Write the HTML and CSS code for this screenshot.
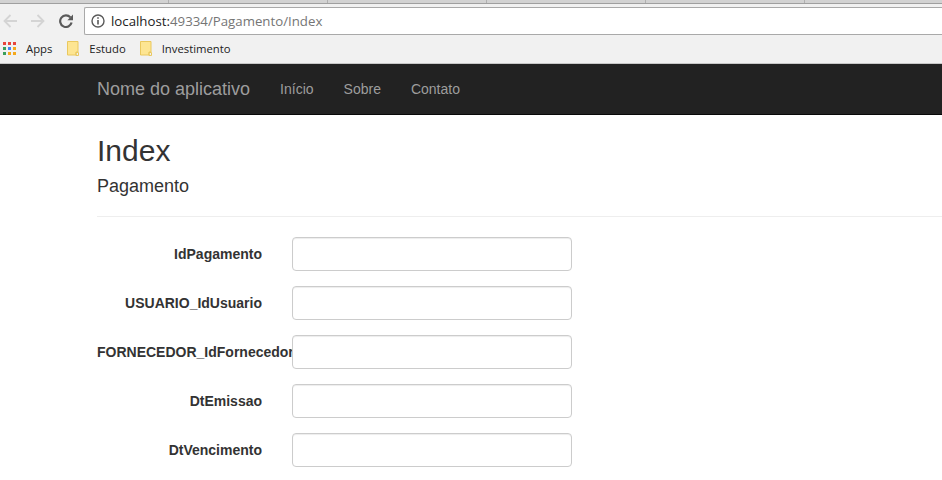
FILE: index.html
```html
<!DOCTYPE html>
<html lang="pt-BR">
<head>
    <meta charset="UTF-8">
    <meta name="viewport" content="width=device-width, initial-scale=1.0">
    <title>Index</title>
    <link rel="stylesheet" href="styles.css">
</head>
<body>
    <div class="browser">
        <div class="tabstrip">
            <div class="tab tab-first"></div>
            <div class="tab"></div>
            <div class="tab"></div>
            <div class="tab"></div>
            <div class="tab"></div>
            <div class="tab tab-last"></div>
        </div>
        <div class="toolbar">
            <svg class="nav-icon" width="14" height="14" viewBox="0 0 14 14"><path d="M14 7H1.5M7.5 1 1.5 7l6 6" fill="none" stroke="#d4d4d4" stroke-width="1.8"/></svg>
            <svg class="nav-icon" width="14" height="14" viewBox="0 0 14 14"><path d="M0 7h12.5M6.5 1l6 6-6 6" fill="none" stroke="#d4d4d4" stroke-width="1.8"/></svg>
            <svg class="nav-icon" width="14" height="14" viewBox="0 0 14 14"><path d="M11.4 3.4A5.8 5.8 0 1 0 12.6 8.6" fill="none" stroke="#5a5a5a" stroke-width="2.2"/><path d="M8.4 6.2H14V.6z" fill="#5a5a5a"/></svg>
            <div class="omnibox">
                <svg width="14" height="14" viewBox="0 0 14 14"><circle cx="7" cy="7" r="6" fill="none" stroke="#5a5a5a" stroke-width="1.4"/><path d="M7 6v4.4M7 3.2v1.6" stroke="#5a5a5a" stroke-width="1.6"/></svg>
                <span class="url"><span class="url-host">localhost:</span>49334/Pagamento/Index</span>
            </div>
        </div>
        <div class="bookmarks">
            <span class="bookmark bookmark-apps">
                <span class="apps-grid">
                    <i class="red"></i><i class="red"></i><i class="red"></i>
                    <i class="green"></i><i class="blue"></i><i class="orange"></i>
                    <i class="green"></i><i class="orange"></i><i class="orange"></i>
                </span>
                Apps
            </span>
            <span class="bookmark">
                <svg width="12" height="15" viewBox="0 0 12 15"><path d="M.5.5h10.5v10.5h-2v3H.5z" fill="#fde592" stroke="#eac85e"/><path d="M9 11.5h2.500v3H9z" fill="none" stroke="#eac85e"/></svg>
                Estudo
            </span>
            <span class="bookmark">
                <svg width="12" height="15" viewBox="0 0 12 15"><path d="M.5.5h10.5v10.5h-2v3H.5z" fill="#fde592" stroke="#eac85e"/><path d="M9 11.5h2.500v3H9z" fill="none" stroke="#eac85e"/></svg>
                Investimento
            </span>
        </div>
    </div>

    <nav class="navbar">
        <a class="navbar-brand" href="#">Nome do aplicativo</a>
        <a class="nav-link" href="#">Início</a>
        <a class="nav-link" href="#">Sobre</a>
        <a class="nav-link" href="#">Contato</a>
    </nav>

    <main class="container">
        <h2 class="page-title">Index</h2>
        <h4 class="page-subtitle">Pagamento</h4>
        <hr class="divider">

        <form class="form-horizontal">
            <div class="form-group">
                <label class="control-label">IdPagamento</label>
                <input class="form-control" type="text">
            </div>
            <div class="form-group">
                <label class="control-label">USUARIO_IdUsuario</label>
                <input class="form-control" type="text">
            </div>
            <div class="form-group">
                <label class="control-label">FORNECEDOR_IdFornecedor</label>
                <input class="form-control" type="text">
            </div>
            <div class="form-group">
                <label class="control-label">DtEmissao</label>
                <input class="form-control" type="text">
            </div>
            <div class="form-group">
                <label class="control-label">DtVencimento</label>
                <input class="form-control" type="text">
            </div>
        </form>
    </main>
</body>
</html>
```

FILE: styles.css
```css
html, body {
    height: 100%;
}

body {
    margin: 0;
    overflow: hidden;
    background-color: #fff;
    color: #333;
    font-family: "Liberation Sans", Arial, sans-serif;
    font-size: 14px;
}

/* Barra do navegador */
.browser {
    height: 64px;
    box-sizing: border-box;
    background-color: #f1f1f1;
    border-bottom: 1px solid #c8c8c8;
}

.tabstrip {
    display: flex;
    height: 3px;
    background-color: #d2d2d2;
    border-bottom: 1px solid #9f9f9f;
}

.tab {
    width: 158px;
    border-right: 1px solid #b0b0b0;
}

.tab-first {
    width: 168px;
}

.tab-last {
    flex: 1;
    border-right: none;
}

.toolbar {
    display: flex;
    align-items: center;
    height: 32px;
    box-sizing: border-box;
    padding: 3px 0 1px 3px;
    gap: 14px;
}

.nav-icon {
    flex: none;
}

.omnibox {
    display: flex;
    align-items: center;
    flex: 1;
    gap: 6px;
    height: 26px;
    margin-left: -3px;
    padding-left: 6px;
    background-color: #fff;
    border: 1px solid #a9a9a9;
    border-right: none;
    border-radius: 2px 0 0 2px;
}

.url {
    color: #757575;
    font-family: "Open Sans", "Liberation Sans", sans-serif;
    font-size: 13.25px;
}

.url-host {
    color: #222;
}

.bookmarks {
    display: flex;
    align-items: center;
    height: 25px;
    padding-left: 3px;
    gap: 14px;
    color: #222;
    font-family: "Open Sans", "Liberation Sans", sans-serif;
    font-size: 11.3px;
}

.bookmark {
    display: flex;
    align-items: center;
    gap: 10px;
}

.bookmark-apps {
    margin-right: 1px;
}

.apps-grid {
    display: grid;
    grid-template-columns: repeat(3, 3px);
    grid-auto-rows: 3px;
    gap: 2px;
}

.apps-grid i {
    display: block;
}

.red { background-color: #e8453c; }
.orange { background-color: #f4a81c; }
.green { background-color: #3a9f5a; }
.blue { background-color: #4285f4; }

/* Navbar */
.navbar {
    display: flex;
    align-items: center;
    height: 51px;
    box-sizing: border-box;
    padding-left: 97px;
    background-color: #222;
    border-bottom: 1px solid #080808;
}

.navbar a {
    color: #9d9d9d;
    text-decoration: none;
}

.navbar-brand {
    margin-right: 30px;
    font-size: 18px;
}

.nav-link {
    margin-right: 30px;
}

/* Conteudo */
.container {
    padding-left: 97px;
}

.page-title {
    margin: 19px 0 0;
    color: #333;
    font-size: 30px;
    font-weight: 500;
    line-height: 33px;
}

.page-subtitle {
    margin: 9px 0 0;
    font-size: 18px;
    font-weight: 500;
    line-height: 20px;
}

.divider {
    margin: 20px 0;
    border: 0;
    border-top: 1px solid #eee;
}

.form-group {
    display: flex;
    align-items: flex-start;
    margin-bottom: 15px;
}

.control-label {
    flex: none;
    width: 165px;
    margin-right: 30px;
    padding-top: 7px;
    font-weight: bold;
    line-height: 20px;
    text-align: right;
    white-space: nowrap;
}

.form-control {
    display: block;
    flex: none;
    width: 280px;
    height: 34px;
    box-sizing: border-box;
    padding: 6px 12px;
    background-color: #fff;
    border: 1px solid #ccc;
    border-radius: 4px;
    box-shadow: inset 0 1px 1px rgba(0,0,0,0.075);
    font-size: 14px;
}
```
